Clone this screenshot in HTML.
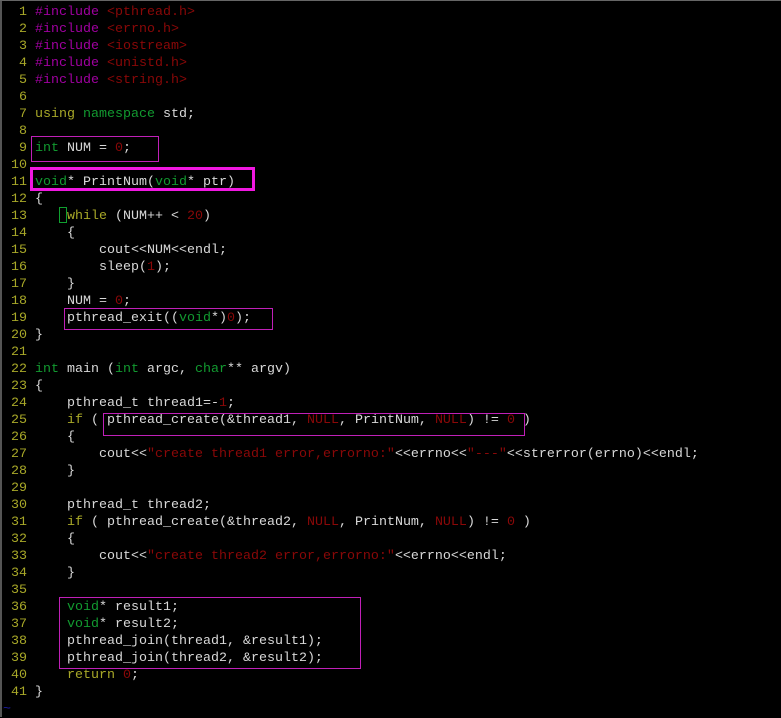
<!DOCTYPE html>
<html><head><meta charset="utf-8">
<style>
html,body{margin:0;padding:0;background:#000;}
body{width:781px;height:717px;overflow:hidden;position:relative;}
#t{position:absolute;left:3px;top:4px;margin:0;font:13.33px/17px "Liberation Mono",monospace;color:#d8d8d8;white-space:pre;filter:blur(.3px);}
i{font-style:normal}
.n{color:#a8a828}.p{color:#a000a0}.s{color:#8a0808}.g{color:#129a30}.y{color:#a8a828}.b{color:#1c1ca8}
.x{position:absolute;box-sizing:border-box;border:1px solid #c020b8;}
#l{position:absolute;left:0;top:0;width:2px;height:717px;background:#555}
#u{position:absolute;left:0;top:0;width:781px;height:1px;background:#666}
</style></head><body>
<div id="l"></div><div id="u"></div>
<pre id="t"><i class="n">  1 </i><i class="p">#include</i> <i class="s">&lt;pthread.h&gt;</i>
<i class="n">  2 </i><i class="p">#include</i> <i class="s">&lt;errno.h&gt;</i>
<i class="n">  3 </i><i class="p">#include</i> <i class="s">&lt;iostream&gt;</i>
<i class="n">  4 </i><i class="p">#include</i> <i class="s">&lt;unistd.h&gt;</i>
<i class="n">  5 </i><i class="p">#include</i> <i class="s">&lt;string.h&gt;</i>
<i class="n">  6 </i>
<i class="n">  7 </i><i class="y">using</i> <i class="g">namespace</i> std;
<i class="n">  8 </i>
<i class="n">  9 </i><i class="g">int</i> NUM = <i class="s">0</i>;
<i class="n"> 10 </i>
<i class="n"> 11 </i><i class="g">void</i>* PrintNum(<i class="g">void</i>* ptr)
<i class="n"> 12 </i>{
<i class="n"> 13 </i>    <i class="y">while</i> (NUM++ &lt; <i class="s">20</i>)
<i class="n"> 14 </i>    {
<i class="n"> 15 </i>        cout&lt;&lt;NUM&lt;&lt;endl;
<i class="n"> 16 </i>        sleep(<i class="s">1</i>);
<i class="n"> 17 </i>    }
<i class="n"> 18 </i>    NUM = <i class="s">0</i>;
<i class="n"> 19 </i>    pthread_exit((<i class="g">void</i>*)<i class="s">0</i>);
<i class="n"> 20 </i>}
<i class="n"> 21 </i>
<i class="n"> 22 </i><i class="g">int</i> main (<i class="g">int</i> argc, <i class="g">char</i>** argv)
<i class="n"> 23 </i>{
<i class="n"> 24 </i>    pthread_t thread1=-<i class="s">1</i>;
<i class="n"> 25 </i>    <i class="y">if</i> ( pthread_create(&amp;thread1, <i class="s">NULL</i>, PrintNum, <i class="s">NULL</i>) != <i class="s">0</i> )
<i class="n"> 26 </i>    {
<i class="n"> 27 </i>        cout&lt;&lt;<i class="s">"create thread1 error,errorno:"</i>&lt;&lt;errno&lt;&lt;<i class="s">"---"</i>&lt;&lt;strerror(errno)&lt;&lt;endl;
<i class="n"> 28 </i>    }
<i class="n"> 29 </i>
<i class="n"> 30 </i>    pthread_t thread2;
<i class="n"> 31 </i>    <i class="y">if</i> ( pthread_create(&amp;thread2, <i class="s">NULL</i>, PrintNum, <i class="s">NULL</i>) != <i class="s">0</i> )
<i class="n"> 32 </i>    {
<i class="n"> 33 </i>        cout&lt;&lt;<i class="s">"create thread2 error,errorno:"</i>&lt;&lt;errno&lt;&lt;endl;
<i class="n"> 34 </i>    }
<i class="n"> 35 </i>
<i class="n"> 36 </i>    <i class="g">void</i>* result1;
<i class="n"> 37 </i>    <i class="g">void</i>* result2;
<i class="n"> 38 </i>    pthread_join(thread1, &amp;result1);
<i class="n"> 39 </i>    pthread_join(thread2, &amp;result2);
<i class="n"> 40 </i>    <i class="y">return</i> <i class="s">0</i>;
<i class="n"> 41 </i>}
<i class="b">~</i></pre>
<div class="x" style="left:31px;top:136px;width:128px;height:26px"></div>
<div class="x" style="left:30px;top:167px;width:225px;height:24px;border:3px solid #f018e0"></div>
<div class="x" style="left:59px;top:207px;width:8px;height:16px;border-color:#10a030"></div>
<div class="x" style="left:64px;top:308px;width:209px;height:22px"></div>
<div class="x" style="left:103px;top:413px;width:422px;height:23px"></div>
<div class="x" style="left:59px;top:597px;width:302px;height:72px"></div>
</body></html>
